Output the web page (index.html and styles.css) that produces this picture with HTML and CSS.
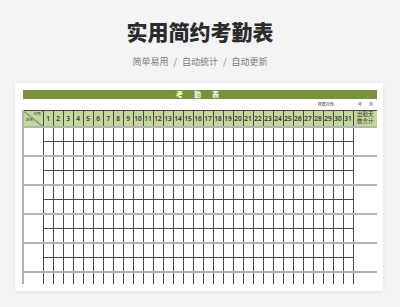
FILE: index.html
```html
<!DOCTYPE html>
<html lang="zh-CN">
<head>
<meta charset="utf-8">
<title>实用简约考勤表</title>
<link rel="stylesheet" href="styles.css">
</head>
<body>
<header class="hero">
  <h1 class="title">实用简约考勤表</h1>
  <p class="subtitle">简单易用<span class="sep">/</span>自动统计<span class="sep">/</span>自动更新</p>
</header>
<section class="card">
  <div class="banner"><span>考</span><span>勤</span><span>表</span></div>
  <div class="meta"><span class="meta-label">所属月份:</span><span class="meta-y">年</span><span class="meta-m">月</span></div>
  <div class="clip">
    <table class="sheet">
      <colgroup><col class="c-name"><col span="31" class="c-day"><col class="c-sum"></colgroup>
      <tr class="head">
        <th class="diag"><span class="d-date">日期</span><span class="d-name">姓名</span></th>
        <th>1</th><th>2</th><th>3</th><th>4</th><th>5</th><th>6</th><th>7</th><th>8</th><th>9</th><th>10</th>
        <th>11</th><th>12</th><th>13</th><th>14</th><th>15</th><th>16</th><th>17</th><th>18</th><th>19</th><th>20</th>
        <th>21</th><th>22</th><th>23</th><th>24</th><th>25</th><th>26</th><th>27</th><th>28</th><th>29</th><th>30</th>
        <th>31</th>
        <th class="sum-h"><span class="sum-line">出勤天</span><span class="sum-line">数合计</span></th>
      </tr>
      <tr class="g"><td rowspan="2" class="name"></td><td></td><td></td><td></td><td></td><td></td><td></td><td></td><td></td><td></td><td></td><td></td><td></td><td></td><td></td><td></td><td></td><td></td><td></td><td></td><td></td><td></td><td></td><td></td><td></td><td></td><td></td><td></td><td></td><td></td><td></td><td></td><td rowspan="2" class="sum"></td></tr>
      <tr><td></td><td></td><td></td><td></td><td></td><td></td><td></td><td></td><td></td><td></td><td></td><td></td><td></td><td></td><td></td><td></td><td></td><td></td><td></td><td></td><td></td><td></td><td></td><td></td><td></td><td></td><td></td><td></td><td></td><td></td><td></td></tr>
      <tr class="g"><td rowspan="2" class="name"></td><td></td><td></td><td></td><td></td><td></td><td></td><td></td><td></td><td></td><td></td><td></td><td></td><td></td><td></td><td></td><td></td><td></td><td></td><td></td><td></td><td></td><td></td><td></td><td></td><td></td><td></td><td></td><td></td><td></td><td></td><td></td><td rowspan="2" class="sum"></td></tr>
      <tr><td></td><td></td><td></td><td></td><td></td><td></td><td></td><td></td><td></td><td></td><td></td><td></td><td></td><td></td><td></td><td></td><td></td><td></td><td></td><td></td><td></td><td></td><td></td><td></td><td></td><td></td><td></td><td></td><td></td><td></td><td></td></tr>
      <tr class="g"><td rowspan="2" class="name"></td><td></td><td></td><td></td><td></td><td></td><td></td><td></td><td></td><td></td><td></td><td></td><td></td><td></td><td></td><td></td><td></td><td></td><td></td><td></td><td></td><td></td><td></td><td></td><td></td><td></td><td></td><td></td><td></td><td></td><td></td><td></td><td rowspan="2" class="sum"></td></tr>
      <tr><td></td><td></td><td></td><td></td><td></td><td></td><td></td><td></td><td></td><td></td><td></td><td></td><td></td><td></td><td></td><td></td><td></td><td></td><td></td><td></td><td></td><td></td><td></td><td></td><td></td><td></td><td></td><td></td><td></td><td></td><td></td></tr>
      <tr class="g"><td rowspan="2" class="name"></td><td></td><td></td><td></td><td></td><td></td><td></td><td></td><td></td><td></td><td></td><td></td><td></td><td></td><td></td><td></td><td></td><td></td><td></td><td></td><td></td><td></td><td></td><td></td><td></td><td></td><td></td><td></td><td></td><td></td><td></td><td></td><td rowspan="2" class="sum"></td></tr>
      <tr><td></td><td></td><td></td><td></td><td></td><td></td><td></td><td></td><td></td><td></td><td></td><td></td><td></td><td></td><td></td><td></td><td></td><td></td><td></td><td></td><td></td><td></td><td></td><td></td><td></td><td></td><td></td><td></td><td></td><td></td><td></td></tr>
      <tr class="g"><td rowspan="2" class="name"></td><td></td><td></td><td></td><td></td><td></td><td></td><td></td><td></td><td></td><td></td><td></td><td></td><td></td><td></td><td></td><td></td><td></td><td></td><td></td><td></td><td></td><td></td><td></td><td></td><td></td><td></td><td></td><td></td><td></td><td></td><td></td><td rowspan="2" class="sum"></td></tr>
      <tr><td></td><td></td><td></td><td></td><td></td><td></td><td></td><td></td><td></td><td></td><td></td><td></td><td></td><td></td><td></td><td></td><td></td><td></td><td></td><td></td><td></td><td></td><td></td><td></td><td></td><td></td><td></td><td></td><td></td><td></td><td></td></tr>
      <tr class="g"><td rowspan="2" class="name"></td><td></td><td></td><td></td><td></td><td></td><td></td><td></td><td></td><td></td><td></td><td></td><td></td><td></td><td></td><td></td><td></td><td></td><td></td><td></td><td></td><td></td><td></td><td></td><td></td><td></td><td></td><td></td><td></td><td></td><td></td><td></td><td rowspan="2" class="sum"></td></tr>
      <tr><td></td><td></td><td></td><td></td><td></td><td></td><td></td><td></td><td></td><td></td><td></td><td></td><td></td><td></td><td></td><td></td><td></td><td></td><td></td><td></td><td></td><td></td><td></td><td></td><td></td><td></td><td></td><td></td><td></td><td></td><td></td></tr>
    </table>
  </div>
</section>
</body>
</html>
```

FILE: styles.css
```css
html, body {
  margin: 0;
  padding: 0;
}
body {
  width: 400px;
  height: 307px;
  overflow: hidden;
  background: #f3f4f6;
  font-family: "Noto Sans CJK SC", "Noto Sans", sans-serif;
  color: #333;
}
.hero {
  height: 83px;
  box-sizing: border-box;
  padding-top: 19px;
  text-align: center;
}
.title {
  margin: 0;
  font-size: 21px;
  line-height: 24px;
  font-weight: 900;
  color: #2b2b2b;
}
.subtitle {
  margin: 13px 0 0;
  font-size: 9px;
  line-height: 12px;
  color: #7a7a7a;
}
.sep {
  margin: 0 5px;
}
.card {
  margin-left: 15px;
  width: 368px;
  height: 208px;
  box-sizing: border-box;
  padding: 7px 6px 0 7px;
  background: #fff;
  box-shadow: 0 1px 4px rgba(0, 0, 0, 0.08);
}
.banner {
  margin-left: 1px;
  height: 9px;
  background: #76923c;
  display: flex;
  justify-content: center;
  align-items: center;
  gap: 11px;
  padding-right: 5px;
  color: #fff;
  font-size: 7px;
  font-weight: 700;
  line-height: 9px;
}
.meta {
  height: 11px;
  display: flex;
  align-items: center;
  justify-content: flex-end;
  padding-right: 4px;
  font-size: 4px;
  line-height: 5px;
  color: #333;
}
.meta-label {
  margin-right: 23px;
}
.meta-y {
  margin-right: 7px;
}
.clip {
  height: 174px;
  overflow: hidden;
}
.sheet {
  border-collapse: collapse;
  table-layout: fixed;
  width: 355px;
}
.c-name { width: 20px; }
.c-day { width: 10px; }
.c-sum { width: 25px; }
.sheet tr {
  height: 14.5px;
}
.sheet tr.head {
  height: 16px;
}
.sheet th,
.sheet td {
  border: 1px solid #4a4a4a;
  padding: 0;
  box-sizing: border-box;
}
.sheet td {
  height: 0;
  font-size: 0;
  line-height: 0;
}
.head th {
  background: #c4d79b;
  font-family: "Noto Sans", "Noto Sans CJK SC", sans-serif;
  font-size: 6.5px;
  font-weight: 600;
  color: #333;
  text-align: center;
  vertical-align: middle;
  line-height: 7px;
}
.head .diag {
  border-left: 2px solid #b3b3b3;
  background:
    linear-gradient(to top right, transparent calc(50% - 0.6px), #444 50%, transparent calc(50% + 0.6px)),
    #c4d79b;
  font-family: "Noto Sans CJK SC", sans-serif;
  font-size: 3.5px;
  font-weight: 400;
  line-height: 4px;
  vertical-align: top;
}
.d-date {
  display: block;
  text-align: right;
  padding: 1px 2px 0 0;
}
.d-name {
  display: block;
  text-align: left;
  padding: 2px 0 0 2px;
}
.head .sum-h {
  border-right: 2px solid #b3b3b3;
  font-family: "Noto Sans CJK SC", sans-serif;
  font-size: 5.5px;
  font-weight: 400;
  line-height: 7px;
}
.sum-line {
  display: block;
}
.sheet .g td {
  border-top: 2px solid #b3b3b3;
}
.sheet .name {
  border-left: 2px solid #b3b3b3;
}
.sheet .sum {
  border-right: 2px solid #b3b3b3;
}
```
